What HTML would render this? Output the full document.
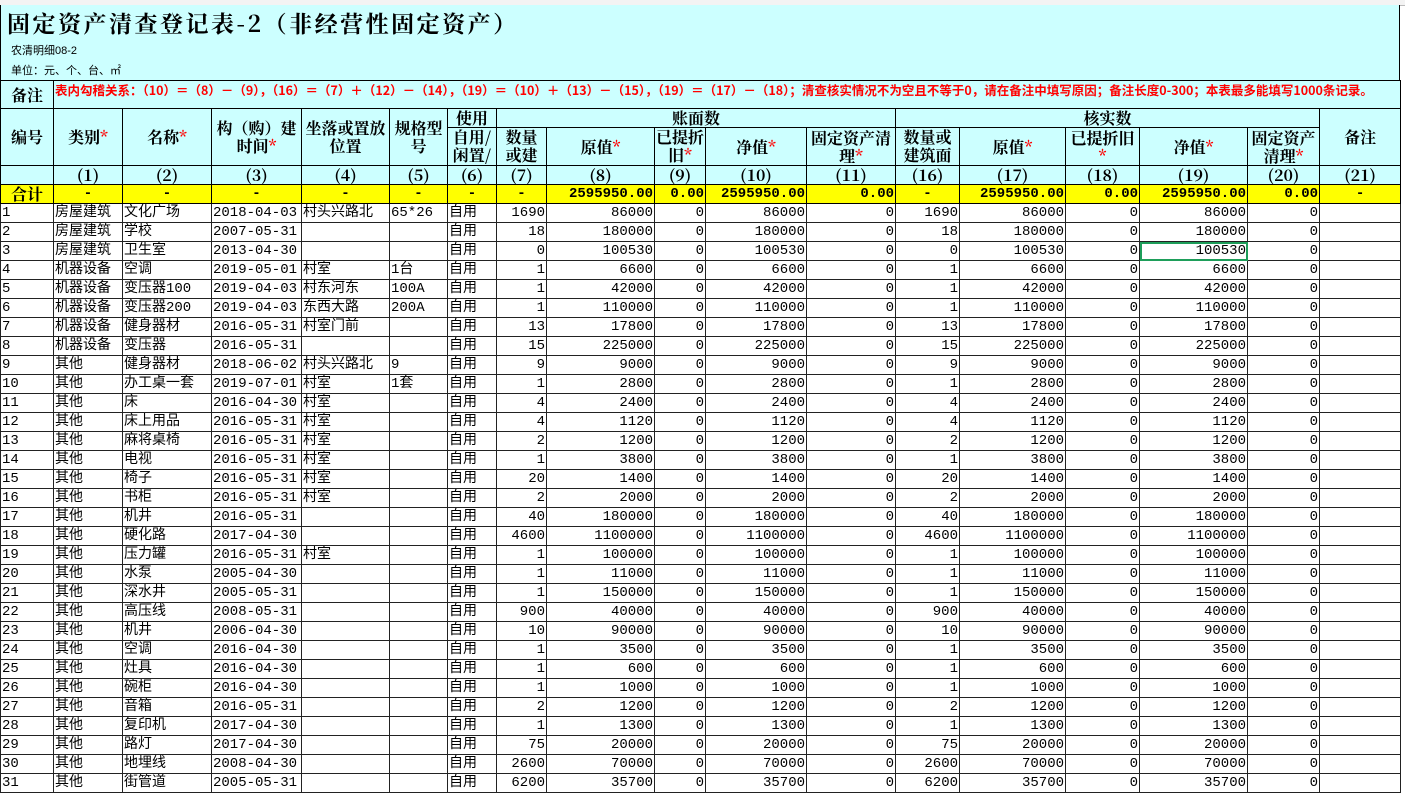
<!DOCTYPE html>
<html><head><meta charset="utf-8"><style>
body{margin:0;width:1405px;height:792px;overflow:hidden;background:#fff;font-family:"Liberation Mono","Noto Sans CJK SC",monospace;}
#strip{position:absolute;left:0;top:0;width:1405px;height:5px;background:#f3f3f3;border-bottom:1px solid #bbb}
#title{position:absolute;left:0;top:5px;width:1400px;height:75px;background:#ccffff;border-left:1px solid #000;border-right:1px solid #000;box-sizing:border-box}
#title .t{position:absolute;left:6px;top:1px;font-family:"Noto Serif CJK SC",serif;font-size:23px;font-weight:bold;letter-spacing:2.5px;white-space:nowrap}
#title .s{position:absolute;left:10px;font-family:"Liberation Sans","Noto Sans CJK SC",sans-serif;font-size:11px}
table{position:absolute;left:0;top:80px;border-collapse:collapse;table-layout:fixed;width:1400px}
td{border:1px solid #000;padding:0 1px;overflow:hidden;white-space:nowrap;font-size:14px;height:18px;line-height:18px}
.h td{background:#ccffff;font-family:"Noto Serif CJK SC",serif;font-weight:bold;font-size:16px;text-align:center;line-height:18px;white-space:normal;word-break:break-all}
.r{color:#f00}
.tot td{background:#ffff00;font-weight:bold;text-align:center;font-size:14px}
.tot td.n{text-align:right}
.d td:nth-child(n+8){text-align:right}
.d td{border-color:#222}
.sel{outline:2px solid #1e9e5a;outline-offset:-2px}
</style></head><body>
<div id="strip"></div>
<div id="title"><div class="t">固定资产清查登记表-2（非经营性固定资产）</div>
<div class="s" style="top:37px">农清明细08-2</div><div class="s" style="top:57px">单位：元、个、台、㎡</div></div>
<table>
<colgroup><col style="width:53px"><col style="width:69px"><col style="width:89px"><col style="width:90px"><col style="width:88px"><col style="width:58px"><col style="width:49px"><col style="width:50px"><col style="width:108px"><col style="width:51px"><col style="width:101px"><col style="width:89px"><col style="width:64px"><col style="width:106px"><col style="width:74px"><col style="width:108px"><col style="width:72px"><col style="width:81px"></colgroup>
<tr class="h"><td style="height:25px">备注</td><td colspan="17" style="text-align:left;color:#f00;font-family:'Noto Sans CJK SC',sans-serif;font-size:12.5px;line-height:14px;vertical-align:top"><div style="height:25px;overflow:hidden;padding-top:2px">表内勾稽关系：（10）＝（8）－（9），（16）＝（7）＋（12）－（14），（19）＝（10）＋（13）－（15），（19）＝（17）－（18）；清查核实情况不为空且不等于0，请在备注中填写原因；备注长度0-300；本表最多能填写1000条记录。</div></td></tr>
<tr class="h"><td rowspan="2">编号</td><td rowspan="2">类别<span class="r">*</span></td><td rowspan="2">名称<span class="r">*</span></td><td rowspan="2">构（购）建时间<span class="r">*</span></td><td rowspan="2">坐落或置放位置</td><td rowspan="2">规格型号</td><td style="height:18px">使用</td><td colspan="5">账面数</td><td colspan="5">核实数</td><td rowspan="2">备注</td></tr>
<tr class="h"><td style="height:37px"><div style="height:37px;overflow:hidden">自用/闲置/</div></td><td><div style="height:37px;overflow:hidden">数量或建</div></td><td>原值<span class="r">*</span></td><td><div style="height:37px;overflow:hidden">已提折旧<span class="r">*</span></div></td><td>净值<span class="r">*</span></td><td>固定资产清理<span class="r">*</span></td><td><div style="height:37px;overflow:hidden">数量或建筑面</div></td><td>原值<span class="r">*</span></td><td>已提折旧<span class="r">*</span></td><td>净值<span class="r">*</span></td><td>固定资产清理<span class="r">*</span></td></tr>
<tr class="h"><td></td><td>(1)</td><td>(2)</td><td>(3)</td><td>(4)</td><td>(5)</td><td>(6)</td><td>(7)</td><td>(8)</td><td>(9)</td><td>(10)</td><td>(11)</td><td>(16)</td><td>(17)</td><td>(18)</td><td>(19)</td><td>(20)</td><td>(21)</td></tr>
<tr class="tot"><td style="font-family:'Noto Serif CJK SC',serif;font-size:16px">合计</td><td>-</td><td>-</td><td>-</td><td>-</td><td>-</td><td>-</td><td>-</td><td class="n">2595950.00</td><td class="n">0.00</td><td class="n">2595950.00</td><td class="n">0.00</td><td>-</td><td class="n">2595950.00</td><td class="n">0.00</td><td class="n">2595950.00</td><td class="n">0.00</td><td>-</td></tr>
<tr class="d"><td>1</td><td>房屋建筑</td><td>文化广场</td><td>2018-04-03</td><td>村头兴路北</td><td>65*26</td><td style="text-align:left">自用</td><td>1690</td><td>86000</td><td>0</td><td>86000</td><td>0</td><td>1690</td><td>86000</td><td>0</td><td>86000</td><td>0</td><td></td></tr>
<tr class="d"><td>2</td><td>房屋建筑</td><td>学校</td><td>2007-05-31</td><td></td><td></td><td style="text-align:left">自用</td><td>18</td><td>180000</td><td>0</td><td>180000</td><td>0</td><td>18</td><td>180000</td><td>0</td><td>180000</td><td>0</td><td></td></tr>
<tr class="d"><td>3</td><td>房屋建筑</td><td>卫生室</td><td>2013-04-30</td><td></td><td></td><td style="text-align:left">自用</td><td>0</td><td>100530</td><td>0</td><td>100530</td><td>0</td><td>0</td><td>100530</td><td>0</td><td class="sel">100530</td><td>0</td><td></td></tr>
<tr class="d"><td>4</td><td>机器设备</td><td>空调</td><td>2019-05-01</td><td>村室</td><td>1台</td><td style="text-align:left">自用</td><td>1</td><td>6600</td><td>0</td><td>6600</td><td>0</td><td>1</td><td>6600</td><td>0</td><td>6600</td><td>0</td><td></td></tr>
<tr class="d"><td>5</td><td>机器设备</td><td>变压器100</td><td>2019-04-03</td><td>村东河东</td><td>100A</td><td style="text-align:left">自用</td><td>1</td><td>42000</td><td>0</td><td>42000</td><td>0</td><td>1</td><td>42000</td><td>0</td><td>42000</td><td>0</td><td></td></tr>
<tr class="d"><td>6</td><td>机器设备</td><td>变压器200</td><td>2019-04-03</td><td>东西大路</td><td>200A</td><td style="text-align:left">自用</td><td>1</td><td>110000</td><td>0</td><td>110000</td><td>0</td><td>1</td><td>110000</td><td>0</td><td>110000</td><td>0</td><td></td></tr>
<tr class="d"><td>7</td><td>机器设备</td><td>健身器材</td><td>2016-05-31</td><td>村室门前</td><td></td><td style="text-align:left">自用</td><td>13</td><td>17800</td><td>0</td><td>17800</td><td>0</td><td>13</td><td>17800</td><td>0</td><td>17800</td><td>0</td><td></td></tr>
<tr class="d"><td>8</td><td>机器设备</td><td>变压器</td><td>2016-05-31</td><td></td><td></td><td style="text-align:left">自用</td><td>15</td><td>225000</td><td>0</td><td>225000</td><td>0</td><td>15</td><td>225000</td><td>0</td><td>225000</td><td>0</td><td></td></tr>
<tr class="d"><td>9</td><td>其他</td><td>健身器材</td><td>2018-06-02</td><td>村头兴路北</td><td>9</td><td style="text-align:left">自用</td><td>9</td><td>9000</td><td>0</td><td>9000</td><td>0</td><td>9</td><td>9000</td><td>0</td><td>9000</td><td>0</td><td></td></tr>
<tr class="d"><td>10</td><td>其他</td><td>办工桌一套</td><td>2019-07-01</td><td>村室</td><td>1套</td><td style="text-align:left">自用</td><td>1</td><td>2800</td><td>0</td><td>2800</td><td>0</td><td>1</td><td>2800</td><td>0</td><td>2800</td><td>0</td><td></td></tr>
<tr class="d"><td>11</td><td>其他</td><td>床</td><td>2016-04-30</td><td>村室</td><td></td><td style="text-align:left">自用</td><td>4</td><td>2400</td><td>0</td><td>2400</td><td>0</td><td>4</td><td>2400</td><td>0</td><td>2400</td><td>0</td><td></td></tr>
<tr class="d"><td>12</td><td>其他</td><td>床上用品</td><td>2016-05-31</td><td>村室</td><td></td><td style="text-align:left">自用</td><td>4</td><td>1120</td><td>0</td><td>1120</td><td>0</td><td>4</td><td>1120</td><td>0</td><td>1120</td><td>0</td><td></td></tr>
<tr class="d"><td>13</td><td>其他</td><td>麻将桌椅</td><td>2016-05-31</td><td>村室</td><td></td><td style="text-align:left">自用</td><td>2</td><td>1200</td><td>0</td><td>1200</td><td>0</td><td>2</td><td>1200</td><td>0</td><td>1200</td><td>0</td><td></td></tr>
<tr class="d"><td>14</td><td>其他</td><td>电视</td><td>2016-05-31</td><td>村室</td><td></td><td style="text-align:left">自用</td><td>1</td><td>3800</td><td>0</td><td>3800</td><td>0</td><td>1</td><td>3800</td><td>0</td><td>3800</td><td>0</td><td></td></tr>
<tr class="d"><td>15</td><td>其他</td><td>椅子</td><td>2016-05-31</td><td>村室</td><td></td><td style="text-align:left">自用</td><td>20</td><td>1400</td><td>0</td><td>1400</td><td>0</td><td>20</td><td>1400</td><td>0</td><td>1400</td><td>0</td><td></td></tr>
<tr class="d"><td>16</td><td>其他</td><td>书柜</td><td>2016-05-31</td><td>村室</td><td></td><td style="text-align:left">自用</td><td>2</td><td>2000</td><td>0</td><td>2000</td><td>0</td><td>2</td><td>2000</td><td>0</td><td>2000</td><td>0</td><td></td></tr>
<tr class="d"><td>17</td><td>其他</td><td>机井</td><td>2016-05-31</td><td></td><td></td><td style="text-align:left">自用</td><td>40</td><td>180000</td><td>0</td><td>180000</td><td>0</td><td>40</td><td>180000</td><td>0</td><td>180000</td><td>0</td><td></td></tr>
<tr class="d"><td>18</td><td>其他</td><td>硬化路</td><td>2017-04-30</td><td></td><td></td><td style="text-align:left">自用</td><td>4600</td><td>1100000</td><td>0</td><td>1100000</td><td>0</td><td>4600</td><td>1100000</td><td>0</td><td>1100000</td><td>0</td><td></td></tr>
<tr class="d"><td>19</td><td>其他</td><td>压力罐</td><td>2016-05-31</td><td>村室</td><td></td><td style="text-align:left">自用</td><td>1</td><td>100000</td><td>0</td><td>100000</td><td>0</td><td>1</td><td>100000</td><td>0</td><td>100000</td><td>0</td><td></td></tr>
<tr class="d"><td>20</td><td>其他</td><td>水泵</td><td>2005-04-30</td><td></td><td></td><td style="text-align:left">自用</td><td>1</td><td>11000</td><td>0</td><td>11000</td><td>0</td><td>1</td><td>11000</td><td>0</td><td>11000</td><td>0</td><td></td></tr>
<tr class="d"><td>21</td><td>其他</td><td>深水井</td><td>2005-05-31</td><td></td><td></td><td style="text-align:left">自用</td><td>1</td><td>150000</td><td>0</td><td>150000</td><td>0</td><td>1</td><td>150000</td><td>0</td><td>150000</td><td>0</td><td></td></tr>
<tr class="d"><td>22</td><td>其他</td><td>高压线</td><td>2008-05-31</td><td></td><td></td><td style="text-align:left">自用</td><td>900</td><td>40000</td><td>0</td><td>40000</td><td>0</td><td>900</td><td>40000</td><td>0</td><td>40000</td><td>0</td><td></td></tr>
<tr class="d"><td>23</td><td>其他</td><td>机井</td><td>2006-04-30</td><td></td><td></td><td style="text-align:left">自用</td><td>10</td><td>90000</td><td>0</td><td>90000</td><td>0</td><td>10</td><td>90000</td><td>0</td><td>90000</td><td>0</td><td></td></tr>
<tr class="d"><td>24</td><td>其他</td><td>空调</td><td>2016-04-30</td><td></td><td></td><td style="text-align:left">自用</td><td>1</td><td>3500</td><td>0</td><td>3500</td><td>0</td><td>1</td><td>3500</td><td>0</td><td>3500</td><td>0</td><td></td></tr>
<tr class="d"><td>25</td><td>其他</td><td>灶具</td><td>2016-04-30</td><td></td><td></td><td style="text-align:left">自用</td><td>1</td><td>600</td><td>0</td><td>600</td><td>0</td><td>1</td><td>600</td><td>0</td><td>600</td><td>0</td><td></td></tr>
<tr class="d"><td>26</td><td>其他</td><td>碗柜</td><td>2016-04-30</td><td></td><td></td><td style="text-align:left">自用</td><td>1</td><td>1000</td><td>0</td><td>1000</td><td>0</td><td>1</td><td>1000</td><td>0</td><td>1000</td><td>0</td><td></td></tr>
<tr class="d"><td>27</td><td>其他</td><td>音箱</td><td>2016-05-31</td><td></td><td></td><td style="text-align:left">自用</td><td>2</td><td>1200</td><td>0</td><td>1200</td><td>0</td><td>2</td><td>1200</td><td>0</td><td>1200</td><td>0</td><td></td></tr>
<tr class="d"><td>28</td><td>其他</td><td>复印机</td><td>2017-04-30</td><td></td><td></td><td style="text-align:left">自用</td><td>1</td><td>1300</td><td>0</td><td>1300</td><td>0</td><td>1</td><td>1300</td><td>0</td><td>1300</td><td>0</td><td></td></tr>
<tr class="d"><td>29</td><td>其他</td><td>路灯</td><td>2017-04-30</td><td></td><td></td><td style="text-align:left">自用</td><td>75</td><td>20000</td><td>0</td><td>20000</td><td>0</td><td>75</td><td>20000</td><td>0</td><td>20000</td><td>0</td><td></td></tr>
<tr class="d"><td>30</td><td>其他</td><td>地埋线</td><td>2008-04-30</td><td></td><td></td><td style="text-align:left">自用</td><td>2600</td><td>70000</td><td>0</td><td>70000</td><td>0</td><td>2600</td><td>70000</td><td>0</td><td>70000</td><td>0</td><td></td></tr>
<tr class="d"><td>31</td><td>其他</td><td>街管道</td><td>2005-05-31</td><td></td><td></td><td style="text-align:left">自用</td><td>6200</td><td>35700</td><td>0</td><td>35700</td><td>0</td><td>6200</td><td>35700</td><td>0</td><td>35700</td><td>0</td><td></td></tr>
</table>
</body></html>
